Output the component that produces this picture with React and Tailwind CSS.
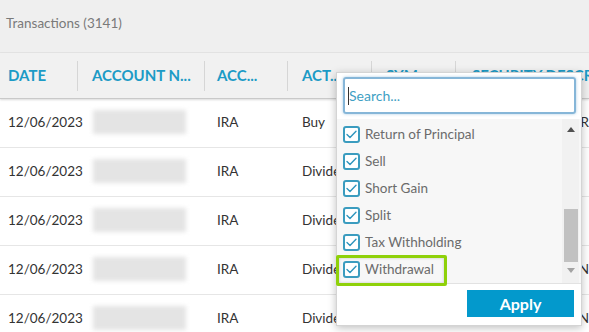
import React from 'react';

const cols = [
  { label: 'DATE', w: 'w-[78px]', pl: 'pl-[8px]' },
  { label: 'ACCOUNT N...', w: 'w-[127px]', pl: 'pl-[14px]' },
  { label: 'ACC...', w: 'w-[83px]', pl: 'pl-[12px]' },
  { label: 'ACT...', w: 'w-[84px]', pl: 'pl-[14px]' },
  { label: 'SYM...', w: 'w-[84px]', pl: 'pl-[14px]' },
  { label: 'SECURITY DESCR', w: 'flex-1', pl: 'pl-[16px]' },
];

const rows = [
  { action: 'Buy', tail: 'R' },
  { action: 'Dividend', tail: '' },
  { action: 'Dividend', tail: '' },
  { action: 'Dividend', tail: 'N' },
  { action: 'Dividend', tail: 'N' },
];

const options = ['Return of Principal', 'Sell', 'Short Gain', 'Split', 'Tax Withholding', 'Withdrawal'];

const Check = () => (
  <span className="w-[17px] h-[17px] shrink-0 rounded-[3px] border-2 border-[#3b9cbf] bg-white flex items-center justify-center">
    <svg width="11" height="9" viewBox="0 0 11 9" fill="none">
      <path d="M1 4.6 L4 7.5 L10 1.2" stroke="#2f95bd" strokeWidth="1.4" strokeLinecap="round" strokeLinejoin="round" />
    </svg>
  </span>
);

const App = () => {
  return (
    <div className="relative w-[589px] h-[332px] overflow-hidden bg-white font-['Lato','Liberation_Sans',sans-serif]">
      <div className="h-[53px] bg-[#efefef] border-b border-[#e4e4e4] px-[6px] pt-[10px]">
        <span className="text-[13.5px] text-[#7a7a7a]">Transactions (3141)</span>
      </div>

      <div className="h-[46px] bg-[#f1f1f1] flex items-center border-b border-[#c9c9c9] shadow-[0_1px_2px_rgba(0,0,0,0.15)]">
        {cols.map((c, i) => (
          <div key={i} className={`${c.w} ${c.pl} h-[30px] flex items-center whitespace-nowrap overflow-hidden ${i < cols.length - 1 ? 'border-r border-[#d6d6d6]' : ''}`}>
            <span className="text-[15px] font-bold text-[#1c9bc6]">{c.label}</span>
          </div>
        ))}
      </div>

      {rows.map((r, i) => (
        <div key={i} className="h-[49px] flex items-center border-b border-[#e6e6e6] text-[13.5px] text-[#333] pb-[2px]">
          <div className="w-[78px] pl-[8px]">12/06/2023</div>
          <div className="w-[127px] pl-[15px]">
            <div className="w-[93px] h-[24px] bg-[#e4e4e4] blur-[2px]" />
          </div>
          <div className="w-[83px] pl-[12px]">IRA</div>
          <div className="w-[84px] pl-[14px] whitespace-nowrap overflow-hidden">{r.action}</div>
          <div className="flex-1 text-right text-[#333]">{r.tail}</div>
        </div>
      ))}

      {/* filter dropdown */}
      <div className="absolute left-[336px] top-[72px] w-[246px] h-[254px] bg-white border border-[#d4d4d4] shadow-[0_2px_8px_rgba(0,0,0,0.25)] flex flex-col">
        <div className="pl-[6px] pr-[5px] pt-[4px] pb-[5px]">
          <div className="h-[37px] rounded-[3px] border-2 border-[#86b6d8] shadow-[0_0_3px_rgba(80,150,200,0.5)] flex items-center pl-[3px]">
            <span className="w-px h-[18px] bg-[#333]" />
            <span className="text-[14px] text-[#3f9fc4]">Search...</span>
          </div>
        </div>
        <div className="relative flex-1 bg-[#f7f7f7] flex border-b border-[#e2e2e2]">
          <div className="flex-1 pt-[2px]">
            {options.map((o) => (
              <div key={o} className="h-[27px] flex items-center gap-[5px] pl-[6px] text-[13.5px] text-[#6b6b6b]">
                <Check />
                <span>{o}</span>
              </div>
            ))}
          </div>
          <div className="w-[17px] mr-[2px] bg-[#f1f1f1] flex flex-col items-center">
            <div className="h-[20px] flex items-center justify-center">
              <svg width="8" height="5" viewBox="0 0 8 5"><path d="M0 5 L4 0 L8 5 Z" fill="#505050" /></svg>
            </div>
            <div className="h-[70px]" />
            <div className="w-[14px] h-[53px] bg-[#c1c1c1]" />
            <div className="h-[16px] flex items-center justify-center">
              <svg width="8" height="5" viewBox="0 0 8 5"><path d="M0 0 L8 0 L4 5 Z" fill="#a3a3a3" /></svg>
            </div>
          </div>
        </div>
        <div className="h-[41px] flex items-center justify-end pr-[7px] pb-[2px]">
          <button className="w-[107px] h-[27px] bg-[#0399cc] text-white text-[16px] font-bold">Apply</button>
        </div>
      </div>

      {/* highlight annotation */}
      <div className="absolute left-[336px] top-[255px] w-[111px] h-[31px] border-[3px] border-[#8fd10a] rounded-[2px] shadow-[inset_0_0_3px_rgba(0,0,0,0.2)]" />
    </div>
  );
};

export default App;
